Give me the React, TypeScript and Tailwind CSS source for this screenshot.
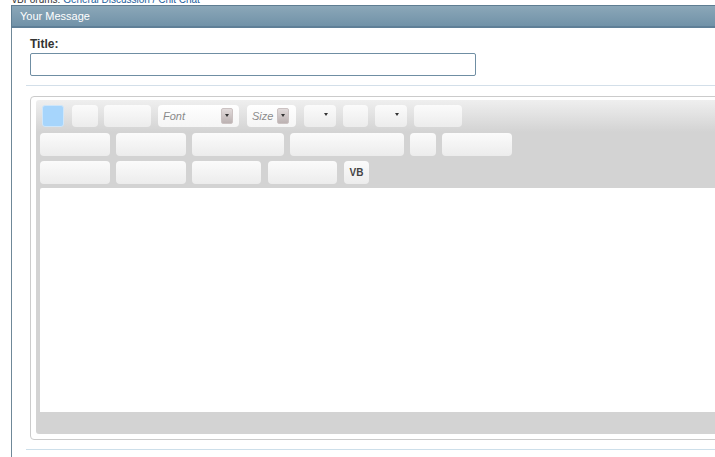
import React from "react";

const btn =
  "h-full rounded-[4px] bg-gradient-to-b from-[#fbfbfb] to-[#ececec] shrink-0";

function Caret() {
  return (
    <div className="w-0 h-0 border-l-[2.5px] border-r-[2.5px] border-t-[3px] border-l-transparent border-r-transparent border-t-[#333]" />
  );
}

function SelArrow() {
  return (
    <div className="w-[12px] h-[16px] rounded-[2px] bg-gradient-to-b from-[#e2dbdb] to-[#bcb2b2] border border-[#cbc2c2] flex justify-center pt-[5px]">
      <Caret />
    </div>
  );
}

export default function App() {
  return (
    <div
      className="w-[715px] h-[457px] overflow-hidden bg-white relative"
      style={{ fontFamily: '"Liberation Sans", Arial, sans-serif' }}
    >
      {/* breadcrumb */}
      <div className="h-[11px] mt-[-6px] pl-[12px] text-[10px] leading-[12px] whitespace-nowrap">
        <span className="text-[#333]">vBForums: </span>
        <span className="text-[#22609c]">General Discussion / Chit Chat</span>
      </div>

      {/* panel */}
      <div className="ml-[11px] w-[760px]">
        <div className="h-[23px] border-t border-l border-[#5e7d92] border-b-2 border-b-[#5f7f97] bg-gradient-to-b from-[#8ba7b8] to-[#7192a8] flex items-center pl-[8px]">
          <span className="text-white text-[11px] leading-none">Your Message</span>
        </div>
        <div className="border-l border-[#6f8898] h-[460px] pt-[9px]">
          <div className="pl-[18px] text-[12px] leading-[14px] font-bold text-[#333]">
            Title:
          </div>
          <div className="ml-[18px] mt-[2px] w-[446px] h-[23px] border border-[#6f8ea3] rounded-[2px] bg-white" />
          <div className="ml-[14px] mt-[9px] h-px bg-[#d3dfe9]" />

          {/* editor frame */}
          <div className="ml-[18px] mt-[10px] border border-[#cbcbcb] rounded-[4px] bg-white pt-[3px] pl-[5px] pb-[5px]">
            <div className="rounded-[3px] bg-[linear-gradient(to_bottom,#efefef_0px,#d3d3d3_32px,#d3d3d3_100%)] pt-[5px] pl-[4px]">
              {/* row 1 */}
              <div className="flex h-[22px] items-stretch">
                <div className="ml-[2px] w-[22px] h-full rounded-[3px] bg-[#a6d5fc] border border-[#cfe6f9] shrink-0" />
                <div className={`${btn} ml-[8px] w-[26px]`} />
                <div className={`${btn} ml-[6px] w-[47px]`} />
                <div className="ml-[7px] w-[81px] h-full rounded-[4px] bg-gradient-to-b from-white to-[#f5f5f5] flex items-center justify-between pl-[5px] pr-[6px] shrink-0">
                  <span className="italic text-[11px] text-[#8a8a8a] leading-none">Font</span>
                  <SelArrow />
                </div>
                <div className="ml-[8px] w-[49px] h-full rounded-[4px] bg-gradient-to-b from-white to-[#f5f5f5] flex items-center justify-between pl-[5px] pr-[7px] shrink-0">
                  <span className="italic text-[11px] text-[#8a8a8a] leading-none">Size</span>
                  <SelArrow />
                </div>
                <div className={`${btn} ml-[8px] w-[32px] flex justify-end pr-[8px] pt-[8px]`}>
                  <Caret />
                </div>
                <div className={`${btn} ml-[7px] w-[25px]`} />
                <div className={`${btn} ml-[7px] w-[32px] flex justify-end pr-[8px] pt-[8px]`}>
                  <Caret />
                </div>
                <div className={`${btn} ml-[7px] w-[48px]`} />
              </div>

              {/* row 2 */}
              <div className="flex h-[23px] mt-[6px]">
                <div className={`${btn} w-[70px]`} />
                <div className={`${btn} ml-[6px] w-[70px]`} />
                <div className={`${btn} ml-[6px] w-[92px]`} />
                <div className={`${btn} ml-[6px] w-[114px]`} />
                <div className={`${btn} ml-[6px] w-[26px]`} />
                <div className={`${btn} ml-[6px] w-[70px]`} />
              </div>

              {/* row 3 */}
              <div className="flex h-[23px] mt-[5px]">
                <div className={`${btn} w-[70px]`} />
                <div className={`${btn} ml-[6px] w-[70px]`} />
                <div className={`${btn} ml-[6px] w-[69px]`} />
                <div className={`${btn} ml-[7px] w-[69px]`} />
                <div className={`${btn} ml-[7px] w-[25px] flex items-center justify-center`}>
                  <span className="text-[10px] font-bold text-[#444] leading-none">VB</span>
                </div>
              </div>

              {/* content */}
              <div className="mt-[4px] h-[224px] bg-white rounded-tl-[2px]" />
              <div className="h-[22px]" />
            </div>
          </div>

          <div className="ml-[14px] mt-[9px] h-px bg-[#cddfea]" />
        </div>
      </div>
    </div>
  );
}
